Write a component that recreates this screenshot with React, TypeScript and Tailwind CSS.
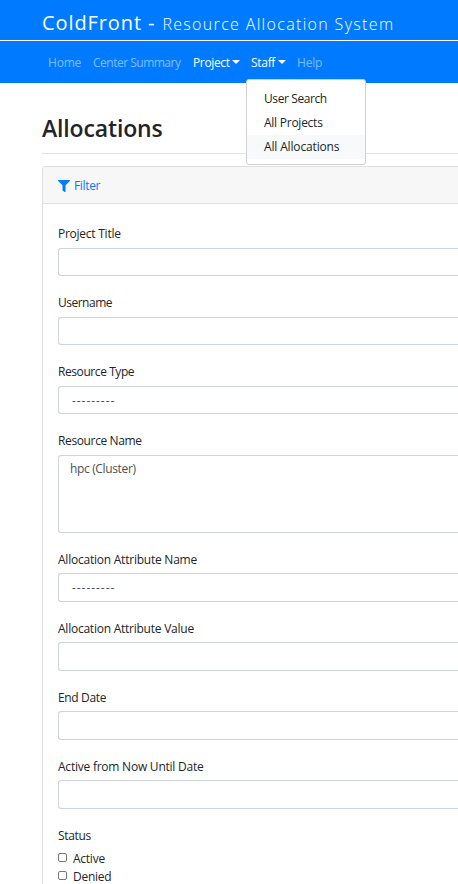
import { FaFilter } from "react-icons/fa";

type Field = { label: string; kind?: "select" | "list"; value?: string; low?: boolean; track: string };

const fields: Field[] = [
  { label: "Project Title", track: "tracking-[-0.25px]" },
  { label: "Username", track: "tracking-[-0.5px]" },
  { label: "Resource Type", kind: "select", value: "---------", track: "tracking-[-0.42px]" },
  { label: "Resource Name", kind: "list", value: "hpc (Cluster)", track: "tracking-[-0.37px]" },
  { label: "Allocation Attribute Name", kind: "select", value: "---------", low: true, track: "tracking-[-0.23px]" },
  { label: "Allocation Attribute Value", low: true, track: "tracking-[-0.24px]" },
  { label: "End Date", low: true, track: "tracking-[-0.35px]" },
  { label: "Active from Now Until Date", low: true, track: "tracking-[-0.23px]" },
];

function Caret() {
  return <span className="ml-[2px] mb-[2px] h-0 w-0 border-x-4 border-t-4 border-x-transparent border-t-white" />;
}

function FormField({ label, kind, value, low, track }: Field) {
  const size = kind === "list" ? "h-[78px] mt-[5px] pt-1 pl-[11px]" : low ? "h-[29px] mt-1 pt-[5px] pl-[13px]" : "h-7 mt-[5px] pt-[5px] pl-[13px]";
  return (
    <div className="mb-[18px]">
      <div className={`h-[18px] leading-[18px] ${track}`}>{label}</div>
      <div className={`${size} rounded-l-[3px] border border-r-0 border-[#ced4da] leading-[18px] text-[#495057]`}>
        <span className={kind === "select" ? "tracking-[0.95px]" : "tracking-[-0.35px]"}>{value}</span>
      </div>
    </div>
  );
}

export default function App() {
  return (
    <div className="h-[884px] w-[458px] overflow-hidden bg-white font-['Open_Sans','Noto_Sans',sans-serif] text-[12px] text-[#212529]">
      <header className="h-[83px] bg-[#007bff] text-white">
        <div className="flex h-[41px] items-baseline border-b border-white pl-[42px] whitespace-nowrap">
          <span className="text-[20px] leading-[45px] tracking-[0.9px]">ColdFront -</span>
          <span className="ml-[7px] text-[16px] font-light tracking-[1.33px]">Resource Allocation System</span>
        </div>
        <nav className="flex h-[42px] items-center pt-[2px] pl-[48px] whitespace-nowrap text-white/50">
          <a className="w-[45px] tracking-[-0.2px]">Home</a>
          <a className="w-[100px] tracking-[-0.5px]">Center Summary</a>
          <a className="flex w-[58px] items-center text-white"><span className="w-[37px] tracking-[-0.35px]">Project</span><Caret /></a>
          <div className="relative flex w-[46px] items-center text-white">
            <span className="w-[25px] tracking-[-0.3px]">Staff</span><Caret />
            <div className="absolute top-[25px] left-[-5px] z-10 h-[86px] w-[120px] rounded-[3px] border border-[#d0d0d0] bg-white py-[7px] leading-6 text-[#212529]">
              <div className="pl-[17px] tracking-[-0.4px]">User Search</div>
              <div className="pl-[17px] tracking-[-0.25px]">All Projects</div>
              <div className="bg-[#f8f9fa] pl-[17px] tracking-[-0.15px]">All Allocations</div>
            </div>
          </div>
          <a className="tracking-[-0.2px]">Help</a>
        </nav>
      </header>
      <main className="pl-[42px]">
        <h1 className="h-[71px] border-b border-[#e5e5e5] pt-[29px] text-[23px] leading-[32px] font-semibold tracking-[-0.15px]">Allocations</h1>
        <section className="mt-3 h-[730px] rounded-l-[3px] border border-r-0 border-[#dfdfdf]">
          <div className="flex h-[37px] items-center border-b border-[#dfdfdf] bg-[#f7f7f7] pt-px pl-[15px] text-[#007bff]">
            <FaFilter size={12} />
            <span className="ml-[4px] pt-px tracking-[-0.35px]">Filter</span>
          </div>
          <form className="pt-[21px] pl-[15px]">
            {fields.map((f) => <FormField key={f.label} {...f} />)}
            <div className="h-[18px] leading-[18px] tracking-[-0.35px]">Status</div>
            <div className="mt-[5px]">
              {["Active", "Denied"].map((s) => (
                <label key={s} className="flex h-[18px] items-start leading-[18px] tracking-[-0.25px]">
                  <span className="mt-[3px] mr-[6px] h-[9px] w-[9px] rounded-[2px] border border-[#767676]" />
                  {s}
                </label>
              ))}
            </div>
          </form>
        </section>
      </main>
    </div>
  );
}
